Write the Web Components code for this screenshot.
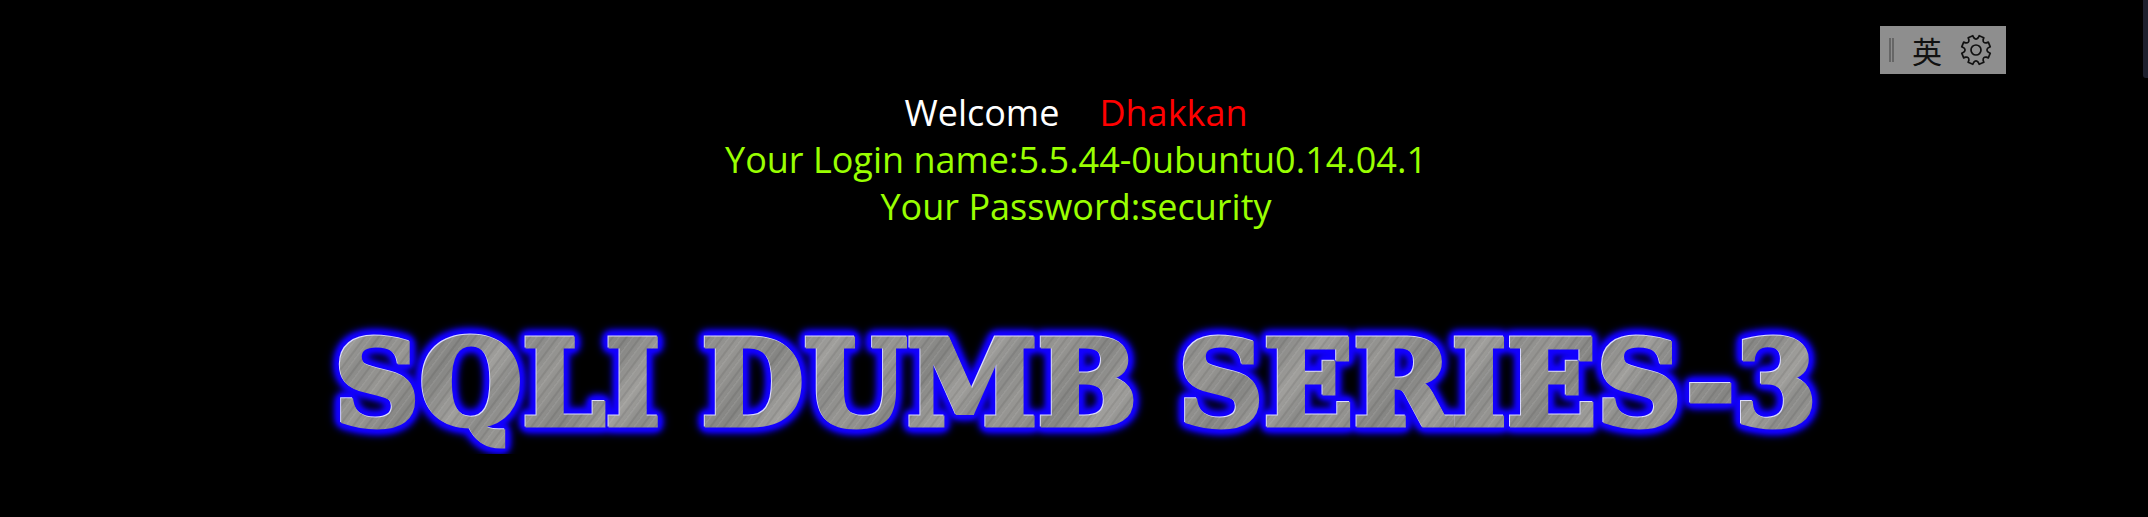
<!DOCTYPE html>
<html lang="en">
<head>
<meta charset="utf-8">
<title>SQLI DUMB SERIES-3</title>
<style>
body { margin: 0; background: #000; overflow-x: hidden; }
</style>
</head>
<body>
<lesson-page>
  <login-result></login-result>
  <metal-title>SQLI DUMB SERIES-3</metal-title>
</lesson-page>
<ime-bar></ime-bar>
<edge-panel></edge-panel>
<script>
class Base extends HTMLElement {
  constructor() {
    super();
    this.attachShadow({ mode: 'open' }).innerHTML = this.constructor.markup;
  }
}

customElements.define('lesson-page', class extends Base {
  static markup = `
    <style>
      :host { display: block; }
      main { display: flex; flex-direction: column; align-items: center; gap: 84px; padding: 89px 0 0 4px; }
    </style>
    <main><slot></slot></main>`;
});

customElements.define('login-result', class extends Base {
  static markup = `
    <style>
      :host { display: block; text-align: center; font: 36px/47px "Open Sans", "Noto Sans", sans-serif; color: #99ff00; }
      p { margin: 0; }
      .greeting { display: flex; justify-content: center; gap: 40px; color: #fff; }
      .name { color: #f00; }
    </style>
    <p class="greeting"><span>Welcome</span><span class="name">Dhakkan</span></p>
    <p>Your Login name:5.5.44-0ubuntu0.14.04.1</p>
    <p>Your Password:security</p>`;
});

customElements.define('metal-title', class extends Base {
  static markup = `
    <style>
      :host { display: block; }
      h1 {
        margin: 0; padding: 0 16px; white-space: nowrap;
        font: bold 118px/140px "DejaVu Serif", serif;
        color: transparent;
        -webkit-text-stroke: 5px transparent;
        background:
          repeating-linear-gradient(127deg, #ffffff14 0 1px, #0000 2px 5px, #00000014 6px 7px, #0000 8px 11px),
          repeating-linear-gradient(127deg, #858583 0, #a09f9c 38px, #8b8b89 61px, #979693 90px, #858583 130px);
        -webkit-background-clip: text;
        background-clip: text;
        filter: drop-shadow(-1px -1px 0 #dcdcff) drop-shadow(0 0 2px #1400ff) drop-shadow(0 0 2px #1400ff) drop-shadow(0 0 2px #1400ff) drop-shadow(0 0 3px #1400ff) drop-shadow(0 0 3px #1400ff);
      }
    </style>
    <h1><slot></slot></h1>`;
});

customElements.define('ime-bar', class extends Base {
  static markup = `
    <style>
      :host { display: flex; align-items: center; position: absolute; top: 26px; right: 142px;
        width: 126px; height: 48px; box-sizing: border-box; padding: 0 14px 0 9px; gap: 18px; background: #8e8e8e; }
      .grip { width: 6px; height: 24px; box-sizing: border-box; border: solid #666; border-width: 0 2px; }
      button { border: 0; padding: 0; background: none; color: #111; font: 30px/46px "Noto Sans CJK SC", sans-serif; }
      svg { display: block; width: 32px; height: 32px; }
      .lang { width: 30px; }
    </style>
    <span class="grip"></span>
    <button class="lang" type="button" lang="zh">英</button>
    <button type="button" aria-label="Settings"><svg viewBox="-16 -16 32 32" fill="none" stroke="#111" stroke-width="1.7" stroke-linejoin="round"><path/><circle r="5"/></svg></button>`;
  connectedCallback() {
    const at = (r, deg) => {
      const a = deg * Math.PI / 180;
      return (r * Math.cos(a)).toFixed(2) + ' ' + (r * Math.sin(a)).toFixed(2);
    };
    let d = '';
    for (let k = 0; k < 8; k++) {
      const a = k * 45 + 22.5;
      d += (k ? 'L' : 'M') + at(12.6, a - 12) + 'L' + at(14.6, a - 10) + 'L' + at(14.6, a + 10)
        + 'L' + at(12.6, a + 12) + 'Q' + at(9.5, a + 22.5) + ' ' + at(12.6, a + 33);
    }
    this.shadowRoot.querySelector('path').setAttribute('d', d + 'Z');
  }
});

customElements.define('edge-panel', class extends Base {
  static markup = `
    <style>
      :host { display: block; position: absolute; top: 0; right: 0; width: 5px; height: 78px;
        box-sizing: border-box; background: #1d202e; border-bottom-left-radius: 3px; }
    </style>`;
});
</script>
</body>
</html>
